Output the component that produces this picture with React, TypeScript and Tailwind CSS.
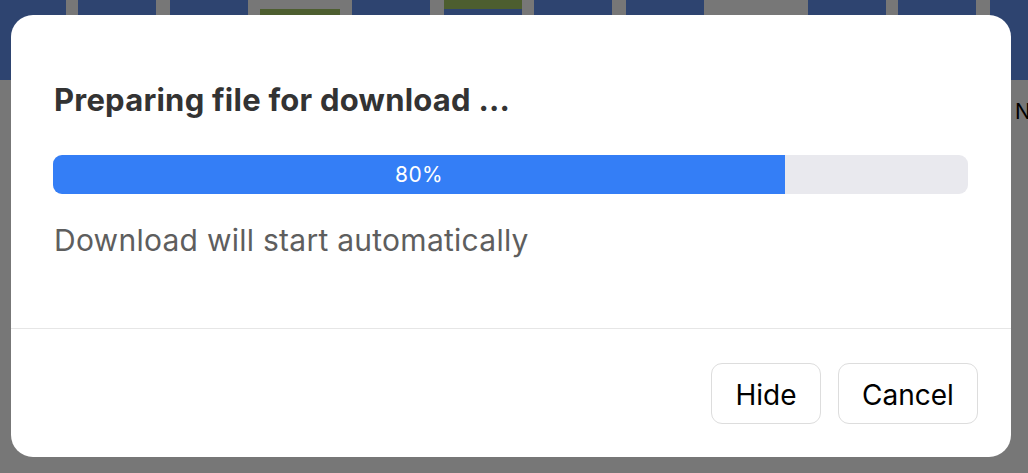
import React from 'react'

// header thumbnails behind the dimmed overlay: [width, kind]
const tiles: { w: number; kind: 'blue' | 'gap' | 'empty' | 'greenTop' | 'emptyGreen' }[] = [
  { w: 66, kind: 'blue' },
  { w: 12, kind: 'gap' },
  { w: 78, kind: 'blue' },
  { w: 14, kind: 'gap' },
  { w: 78, kind: 'blue' },
  { w: 104, kind: 'emptyGreen' },
  { w: 78, kind: 'blue' },
  { w: 14, kind: 'gap' },
  { w: 78, kind: 'greenTop' },
  { w: 12, kind: 'gap' },
  { w: 78, kind: 'blue' },
  { w: 14, kind: 'gap' },
  { w: 78, kind: 'blue' },
  { w: 104, kind: 'empty' },
  { w: 78, kind: 'blue' },
  { w: 12, kind: 'gap' },
  { w: 78, kind: 'blue' },
  { w: 14, kind: 'gap' },
  { w: 78, kind: 'blue' },
]

function Tile({ w, kind }: { w: number; kind: string }) {
  if (kind === 'blue') return <div className="h-full shrink-0 bg-[#2e4470]" style={{ width: w }} />
  if (kind === 'greenTop')
    return (
      <div className="flex h-full shrink-0 flex-col bg-[#2e4470]" style={{ width: w }}>
        <div className="h-[9px] bg-[#4d5e2f]" />
      </div>
    )
  if (kind === 'emptyGreen')
    return (
      <div className="h-full shrink-0 bg-[#777777] px-[12px] pt-[9px]" style={{ width: w }}>
        <div className="h-[60px] bg-[#4d5e2f]" />
      </div>
    )
  return <div className="h-full shrink-0 bg-[#777777]" style={{ width: w }} />
}

function Button({ children, width }: { children: React.ReactNode; width: string }) {
  return (
    <button
      className={`${width} h-[61px] rounded-[11px] border-[1.5px] border-[#dddddd] bg-white pt-[3px] text-[28px] leading-none text-black`}
    >
      {children}
    </button>
  )
}

export default function App() {
  const progress = 80

  return (
    <div
      className="relative h-[473px] w-[1028px] overflow-hidden bg-[#777777]"
      style={{ fontFamily: 'Inter, "Noto Sans", sans-serif' }}
    >
      {/* page behind overlay */}
      <div className="flex h-[80px] overflow-hidden">
        {tiles.map((t, i) => (
          <Tile key={i} w={t.w} kind={t.kind} />
        ))}
      </div>
      <div className="flex justify-end pt-[18px]">
        <span className="w-[13px] overflow-hidden text-[21px] leading-[28px] text-black">N</span>
      </div>

      {/* dialog */}
      <div className="absolute left-[11px] top-[15px] flex h-[442px] w-[1000px] flex-col rounded-[22px] bg-white">
        <div className="pb-[70px] pl-[42px] pr-[43px] pt-[67px]">
          <h2 className="pl-[1px] text-[31px] font-bold leading-[36px] tracking-[0.23px] text-[#333333]">
            Preparing file for download ...
          </h2>
          <div className="mt-[37px] flex h-[39px] overflow-hidden rounded-[9px] bg-[#e9e9ee]">
            <div
              className="flex h-full items-center justify-center bg-[#347ef6] text-[21px] tracking-[0.3px] text-white"
              style={{ width: `${progress}%` }}
            >
              {progress}%
            </div>
          </div>
          <p className="mt-[28px] pl-[1px] text-[30px] leading-[36px] tracking-[0.26px] text-[#5e5e5e]">
            Download will start automatically
          </p>
        </div>
        <div className="flex justify-end gap-[17px] border-t border-[#e6e6e6] pb-[33px] pr-[33px] pt-[34px]">
          <Button width="w-[110px]">Hide</Button>
          <Button width="w-[140px]">Cancel</Button>
        </div>
      </div>
    </div>
  )
}
